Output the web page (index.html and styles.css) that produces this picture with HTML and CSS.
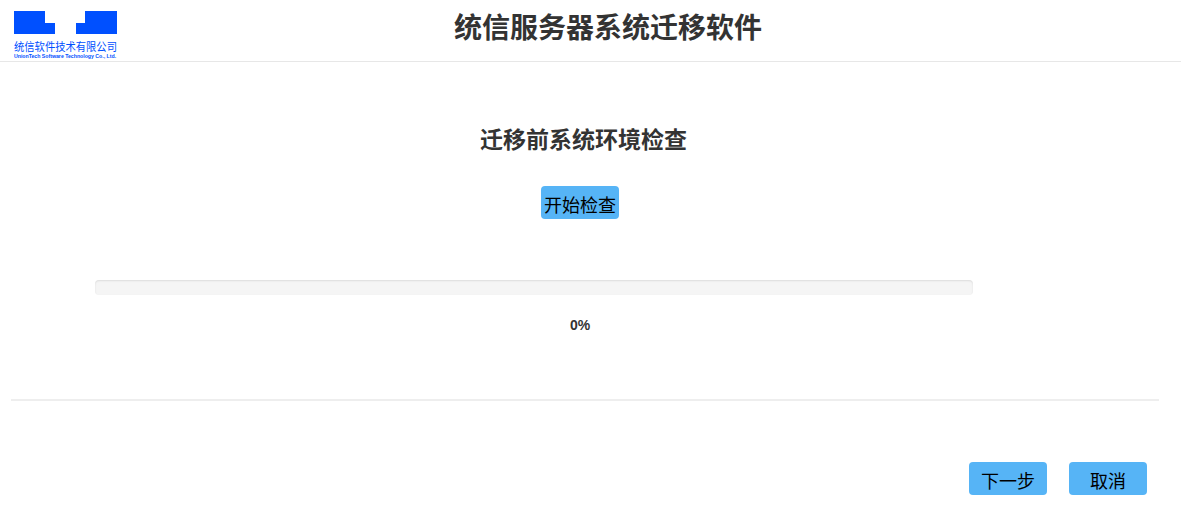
FILE: index.html
```html
<!DOCTYPE html>
<html lang="zh-CN">
<head>
    <meta charset="UTF-8">
    <meta name="viewport" content="width=device-width, initial-scale=1.0">
    <title>统信服务器系统迁移软件</title>
    <link rel="stylesheet" href="styles.css">
</head>
<body>
    <header class="header">
        <div class="logo">
            <svg class="logo-mark" width="103" height="23" viewBox="0 0 103 23">
                <path fill="#0050ff" d="M0 0H31V12H41V23H0Z"/>
                <path fill="#0050ff" d="M71 0H103V23H62V12H71Z"/>
            </svg>
            <div class="logo-name">统信软件技术有限公司</div>
            <div class="logo-en">UnionTech Software Technology Co., Ltd.</div>
        </div>
        <h1 class="title">统信服务器系统迁移软件</h1>
    </header>

    <main class="main">
        <h2 class="check-title">迁移前系统环境检查</h2>
        <div class="check-action">
            <button class="btn" type="button">开始检查</button>
        </div>
        <div class="progress"></div>
        <p class="percent">0%</p>
    </main>

    <hr class="divider">

    <footer class="footer">
        <button class="btn" type="button">下一步</button>
        <button class="btn" type="button">取消</button>
    </footer>
</body>
</html>
```

FILE: styles.css
```css
html{
    box-sizing: border-box;
    font-family: "Liberation Sans", "Noto Sans CJK SC", sans-serif;
    font-size: 14px;
}

*,
*:after,
*:before{
    box-sizing: inherit;
}

body{
    margin: 0;
    color: #333;
    background-color: #fff;
}

.header{
    display: flex;
    height: 62px;
    padding-left: 14px;
    border-bottom: 1px solid #e7e7e7;
}

.logo{
    width: 103px;
    padding-top: 11px;
    flex: none;
}

.logo-mark{
    display: block;
}

.logo-name{
    margin-top: 6px;
    font-size: 10.3px;
    line-height: 13px;
    color: #0050ff;
    white-space: nowrap;
    transform: scaleY(1.15);
}

.logo-en{
    font-size: 5.2px;
    line-height: 6px;
    font-weight: bold;
    color: #0050ff;
    white-space: nowrap;
}

.title{
    margin: 0;
    padding-left: 337px;
    font-size: 28px;
    line-height: 57px;
    font-weight: bold;
    white-space: nowrap;
}

.main{
    height: 337px;
    padding: 61px 0 0;
}

.check-title{
    margin: 0;
    font-size: 23px;
    line-height: 34px;
    font-weight: bold;
    text-align: center;
    padding-right: 14px;
}

.check-action{
    margin-top: 29px;
    padding-right: 21px;
    text-align: center;
}

.btn{
    height: 33px;
    width: 78px;
    padding: 2px 0 0;
    border: 0;
    border-radius: 4px;
    font-family: inherit;
    font-size: 18px;
    color: #000;
    background-color: #56b4f6;
}

.progress{
    width: 878px;
    height: 15px;
    margin: 61px 0 0 95px;
    border-radius: 4px;
    background-color: #f5f5f5;
    box-shadow: inset 0 1px 2px rgba(0,0,0,.1);
}

.percent{
    margin: 22px 0 0;
    padding-right: 21px;
    font-size: 14px;
    line-height: 17px;
    font-weight: bold;
    text-align: center;
}

.divider{
    width: 1148px;
    height: 2px;
    margin: 0 0 0 11px;
    border: 0;
    background-color: #eee;
}

.footer{
    display: flex;
    justify-content: flex-end;
    gap: 22px;
    padding: 61px 34px 0 0;
}
```
